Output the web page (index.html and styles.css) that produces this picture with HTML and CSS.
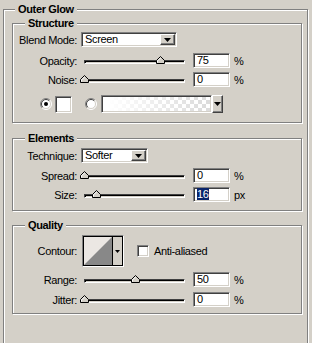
FILE: index.html
```html
<!DOCTYPE html>
<html>
<head>
<meta charset="utf-8">
<link rel="stylesheet" href="styles.css">
</head>
<body>
<fieldset class="group outer">
  <legend class="title">Outer Glow</legend>

  <fieldset class="group sub structure">
    <legend class="title">Structure</legend>
    <div class="row r-blend">
      <span class="lbl">Blend Mode:</span>
      <div class="combo combo-blend">
        <span class="combo-val">Screen</span>
        <span class="combo-btn"><svg width="7" height="4" viewBox="0 0 7 4"><polygon points="0,0 7,0 3.5,4" fill="#000"/></svg></span>
      </div>
    </div>
    <div class="row r-opacity">
      <span class="lbl">Opacity:</span>
      <div class="slider">
        <div class="track"></div>
        <span class="thumb" style="left:75%"><svg width="9" height="8" viewBox="0 0 9 8"><polygon points="0.5,7.5 0.5,4.5 4.5,0.5 8.5,4.5 8.5,7.5" fill="#d4d0c8" stroke="#000"/><polyline points="1.5,6.5 1.5,4.9 4.5,1.9" fill="none" stroke="#fff"/></svg></span>
      </div>
      <span class="field">75</span><span class="unit">%</span>
    </div>
    <div class="row r-noise">
      <span class="lbl">Noise:</span>
      <div class="slider">
        <div class="track"></div>
        <span class="thumb" style="left:0%"><svg width="9" height="8" viewBox="0 0 9 8"><polygon points="0.5,7.5 0.5,4.5 4.5,0.5 8.5,4.5 8.5,7.5" fill="#d4d0c8" stroke="#000"/><polyline points="1.5,6.5 1.5,4.9 4.5,1.9" fill="none" stroke="#fff"/></svg></span>
      </div>
      <span class="field">0</span><span class="unit">%</span>
    </div>
    <div class="row r-color">
      <span class="radio on"><svg width="12" height="12" viewBox="0 0 12 12"><circle cx="6" cy="6" r="5" fill="#fff"/><path d="M2.1 9.9A5.5 5.5 0 0 1 9.9 2.1" fill="none" stroke="#808080"/><path d="M9.9 2.1A5.5 5.5 0 0 1 2.1 9.9" fill="none" stroke="#fff"/><path d="M2.8 9.2A4.5 4.5 0 0 1 9.2 2.8" fill="none" stroke="#404040"/><path d="M9.2 2.8A4.5 4.5 0 0 1 2.8 9.2" fill="none" stroke="#d4d0c8"/><circle cx="6" cy="6" r="2" fill="#000"/></svg></span>
      <span class="swatch"></span>
      <span class="radio off"><svg width="12" height="12" viewBox="0 0 12 12"><circle cx="6" cy="6" r="5" fill="#fff"/><path d="M2.1 9.9A5.5 5.5 0 0 1 9.9 2.1" fill="none" stroke="#808080"/><path d="M9.9 2.1A5.5 5.5 0 0 1 2.1 9.9" fill="none" stroke="#fff"/><path d="M2.8 9.2A4.5 4.5 0 0 1 9.2 2.8" fill="none" stroke="#404040"/><path d="M9.2 2.8A4.5 4.5 0 0 1 2.8 9.2" fill="none" stroke="#d4d0c8"/></svg></span>
      <div class="grad">
        <span class="grad-box"></span>
        <span class="grad-btn"><svg width="7" height="4" viewBox="0 0 7 4"><polygon points="0,0 7,0 3.5,4" fill="#000"/></svg></span>
      </div>
    </div>
  </fieldset>

  <fieldset class="group sub elements">
    <legend class="title">Elements</legend>
    <div class="row r-tech">
      <span class="lbl">Technique:</span>
      <div class="combo combo-tech">
        <span class="combo-val">Softer</span>
        <span class="combo-btn"><svg width="7" height="4" viewBox="0 0 7 4"><polygon points="0,0 7,0 3.5,4" fill="#000"/></svg></span>
      </div>
    </div>
    <div class="row r-spread">
      <span class="lbl">Spread:</span>
      <div class="slider">
        <div class="track"></div>
        <span class="thumb" style="left:0%"><svg width="9" height="8" viewBox="0 0 9 8"><polygon points="0.5,7.5 0.5,4.5 4.5,0.5 8.5,4.5 8.5,7.5" fill="#d4d0c8" stroke="#000"/><polyline points="1.5,6.5 1.5,4.9 4.5,1.9" fill="none" stroke="#fff"/></svg></span>
      </div>
      <span class="field">0</span><span class="unit">%</span>
    </div>
    <div class="row r-size">
      <span class="lbl">Size:</span>
      <div class="slider">
        <div class="track"></div>
        <span class="thumb" style="left:12%"><svg width="9" height="8" viewBox="0 0 9 8"><polygon points="0.5,7.5 0.5,4.5 4.5,0.5 8.5,4.5 8.5,7.5" fill="#d4d0c8" stroke="#000"/><polyline points="1.5,6.5 1.5,4.9 4.5,1.9" fill="none" stroke="#fff"/></svg></span>
      </div>
      <span class="field"><span class="sel">16</span></span><span class="unit">px</span>
    </div>
  </fieldset>

  <fieldset class="group sub quality">
    <legend class="title">Quality</legend>
    <div class="row r-contour">
      <span class="lbl">Contour:</span>
      <div class="contour">
        <span class="contour-pic"><svg width="28" height="28" viewBox="0 0 28 28" preserveAspectRatio="none"><rect width="28" height="28" fill="#ebe7e3"/><polygon points="0,28 28,0 28,28" fill="#888888"/></svg></span>
        <span class="contour-btn"><svg width="5" height="3" viewBox="0 0 5 3"><polygon points="0,0 5,0 2.5,3" fill="#000"/></svg></span>
      </div>
      <span class="check"></span>
      <span class="check-lbl">Anti-aliased</span>
    </div>
    <div class="row r-range">
      <span class="lbl">Range:</span>
      <div class="slider">
        <div class="track"></div>
        <span class="thumb" style="left:50%"><svg width="9" height="8" viewBox="0 0 9 8"><polygon points="0.5,7.5 0.5,4.5 4.5,0.5 8.5,4.5 8.5,7.5" fill="#d4d0c8" stroke="#000"/><polyline points="1.5,6.5 1.5,4.9 4.5,1.9" fill="none" stroke="#fff"/></svg></span>
      </div>
      <span class="field">50</span><span class="unit">%</span>
    </div>
    <div class="row r-jitter">
      <span class="lbl">Jitter:</span>
      <div class="slider">
        <div class="track"></div>
        <span class="thumb" style="left:0%"><svg width="9" height="8" viewBox="0 0 9 8"><polygon points="0.5,7.5 0.5,4.5 4.5,0.5 8.5,4.5 8.5,7.5" fill="#d4d0c8" stroke="#000"/><polyline points="1.5,6.5 1.5,4.9 4.5,1.9" fill="none" stroke="#fff"/></svg></span>
      </div>
      <span class="field">0</span><span class="unit">%</span>
    </div>
  </fieldset>
</fieldset>
</body>
</html>
```

FILE: styles.css
```css
* { box-sizing: border-box; }
html, body { margin: 0; padding: 0; }
body {
  background: #d4d0c8;
  width: 312px;
  height: 343px;
  overflow: hidden;
  font-family: "Liberation Sans", Arial, sans-serif;
  font-size: 11px;
  letter-spacing: -0.35px;
  color: #000;
}

.group {
  border: 1px solid #808080;
  box-shadow: inset 1px 1px 0 #fff, 1px 1px 0 #fff;
  min-width: 0;
}
.outer { margin: 3px 4px 0 3px; padding: 1px 5px 40px 8px; }
.sub { margin: 0; padding: 0; }
.structure { margin-bottom: 9px; padding-bottom: 9px; }
.elements { margin-bottom: 8px; padding-bottom: 8px; }
.quality { padding-bottom: 6px; }

.title {
  font-weight: bold;
  line-height: 13px;
  height: 13px;
  padding: 0 3px;
  background: #d4d0c8;
}
.outer > .title { margin-left: 3px; }
.sub > .title { margin-left: 12px; }

.row { display: flex; align-items: center; height: 15px; }
.lbl { width: 64px; flex: none; text-align: right; white-space: nowrap; }

.r-blend { margin-top: 2px; }
.r-opacity { margin-top: 6px; }
.r-noise { margin-top: 4px; }
.r-color { margin-top: 8px; height: 18px; }
.r-tech { margin-top: 3px; }
.r-spread { margin-top: 5px; }
.r-size { margin-top: 4px; }
.r-contour { margin-top: 3px; height: 32px; }
.r-range { margin-top: 5px; }
.r-jitter { margin-top: 5px; }

/* sunken edit-like boxes */
.combo, .field, .swatch, .grad-box, .check {
  background: #fff;
  border: 1px solid;
  border-color: #808080 #fff #fff #808080;
  box-shadow: inset 1px 1px 0 #404040, inset -1px -1px 0 #d4d0c8;
}

.combo {
  display: flex;
  align-items: stretch;
  height: 15px;
  margin-left: 4px;
  padding: 1px;
  flex: none;
}
.combo-blend { width: 96px; }
.combo-tech { width: 67px; }
.combo-val { flex: 1; padding-left: 2px; line-height: 11px; }
.combo-btn, .grad-btn {
  width: 15px;
  display: flex;
  align-items: center;
  justify-content: center;
  background: #d4d0c8;
  border: 1px solid;
  border-color: #fff #404040 #404040 #fff;
  box-shadow: inset -1px -1px 0 #808080;
}
.combo-btn svg, .grad-btn svg { display: block; }

.slider { position: relative; width: 101px; height: 15px; margin-left: 7px; flex: none; }
.track {
  margin-top: 7px;
  height: 4px;
  background: #d4d0c8;
  border: 1px solid;
  border-color: #404040 #fff #fff #404040;
  box-shadow: inset 1px 1px 0 #000;
}
.thumb { position: absolute; top: 3px; margin-left: -4px; width: 9px; height: 8px; }
.thumb svg { display: block; }

.field {
  width: 37px;
  height: 15px;
  margin-left: 8px;
  padding-left: 3px;
  line-height: 13px;
  flex: none;
}
.sel { background: #0a246a; color: #fff; }
.unit { margin-left: 4px; }

.radio { width: 12px; height: 12px; flex: none; }
.radio svg { display: block; }
.radio.on { margin-left: 27px; }
.radio.off { margin-left: 13px; }
.swatch { width: 17px; height: 17px; margin-left: 3px; flex: none; }

.grad { display: flex; height: 18px; margin-left: 4px; }
.grad-box {
  width: 111px;
  background:
    linear-gradient(to right, #fff 5%, rgba(255,255,255,0) 95%),
    repeating-conic-gradient(#dcdcdc 0 25%, #fff 0 50%) 0 0 / 8px 8px;
}
.grad-btn { width: 11px; }

.contour {
  display: flex;
  width: 42px;
  height: 32px;
  margin-left: 5px;
  border: 1px solid;
  border-color: #808080 #fff #fff #808080;
  box-shadow: inset 1px 1px 0 #000, inset -1px -1px 0 #000;
  padding: 1px;
  flex: none;
}
.contour-pic { width: 28px; height: 28px; }
.contour-pic svg { display: block; }
.contour-btn {
  flex: 1;
  display: flex;
  align-items: center;
  justify-content: center;
  border-left: 1px solid #000;
  background: #d4d0c8;
}
.contour-btn svg { display: block; }

.check { width: 12px; height: 12px; margin-left: 13px; flex: none; }
.check-lbl { margin-left: 5px; }
```
